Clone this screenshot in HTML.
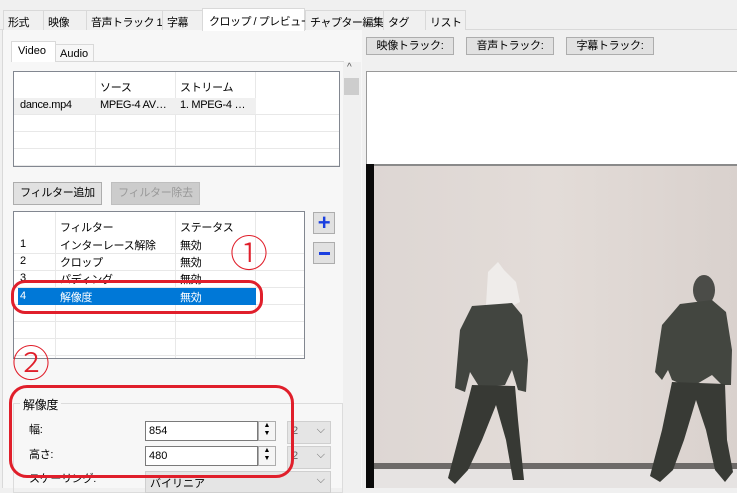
<!DOCTYPE html>
<html><head><meta charset="utf-8"><style>
*{margin:0;padding:0;box-sizing:border-box}
body{width:737px;height:488px;overflow:hidden;background:#f0f0f0;font-family:"Liberation Sans","Noto Sans CJK JP",sans-serif;font-size:11px;color:#000;position:relative}
.a{position:absolute}
.tab{position:absolute;top:10px;height:20px;border:1px solid #d9d9d9;border-bottom:none;background:#f0f0f0;padding:3px 0 0 4px;white-space:nowrap;letter-spacing:-0.5px}
.btn{position:absolute;border:1px solid #adadad;background:#e1e1e1;text-align:center;line-height:16px;letter-spacing:-0.3px}
.grid{position:absolute;background:#fff;border:1px solid #828790;overflow:hidden}
.hl{position:absolute;left:0;right:0;height:1px;background:#e8e8e8}
.vl{position:absolute;top:0;bottom:0;width:1px;background:#e8e8e8}
.t{position:absolute;white-space:nowrap;letter-spacing:-0.3px}
.inp{position:absolute;background:#fff;border:1px solid #7a7a7a;padding:3px 0 0 3px}
.spin{position:absolute;width:18px;border:1px solid #adadad;background:#f5f5f5}
.combo{position:absolute;background:#e5e5e5;border:1px solid #cfcfcf;padding:3px 0 0 4px;color:#666}
.red{position:absolute;border:3.5px solid #e01f2b;border-radius:14px}
</style></head><body>
<div class="a" style="left:0;top:29px;width:737px;height:1px;background:#d9d9d9"></div>
<div class="a" style="left:2px;top:29px;width:360px;height:459px;background:#f7f7f7;border-left:1px solid #d9d9d9"></div>
<div class="tab" style="left:3px;width:41px">形式</div>
<div class="tab" style="left:43px;width:44px">映像</div>
<div class="tab" style="left:86px;width:77px">音声トラック 1</div>
<div class="tab" style="left:162px;width:41px">字幕</div>
<div class="tab" style="left:202px;top:8px;height:23px;width:103px;background:#fff;padding-top:4px;padding-left:6px">クロップ / プレビュー</div>
<div class="tab" style="left:305px;width:79px">チャプター編集</div>
<div class="tab" style="left:383px;width:43px">タグ</div>
<div class="tab" style="left:425px;width:41px">リスト</div>
<div class="a" style="left:11px;top:61px;width:333px;height:1px;background:#d9d9d9"></div>
<div class="a" style="left:11px;top:41px;width:45px;height:21px;background:#fff;border:1px solid #d9d9d9;border-bottom:none;padding:3px 0 0 6px;font-size:11px">Video</div>
<div class="a" style="left:55px;top:44px;width:39px;height:18px;border:1px solid #d9d9d9;border-bottom:none;padding:3px 0 0 4px;font-size:11px">Audio</div>
<div class="grid" style="left:13px;top:71px;width:327px;height:96px">
<div class="vl" style="left:81px"></div><div class="vl" style="left:161px"></div><div class="vl" style="left:241px"></div>
<div class="a" style="left:0;top:26px;width:242px;height:16px;background:#f0f0f0"></div>
<div class="hl" style="top:42px"></div><div class="hl" style="top:59px"></div><div class="hl" style="top:76px"></div><div class="hl" style="top:93px"></div>
<div class="t" style="left:86px;top:7px">ソース</div><div class="t" style="left:166px;top:7px">ストリーム</div>
<div class="t" style="left:6px;top:27px">dance.mp4</div><div class="t" style="left:86px;top:27px">MPEG-4 AV…</div><div class="t" style="left:166px;top:27px">1. MPEG-4 …</div>
</div>
<div class="btn" style="left:13px;top:182px;width:89px;height:23px;line-height:21px">フィルター追加</div>
<div class="btn" style="left:111px;top:182px;width:89px;height:23px;line-height:21px;color:#999;background:#ccc;border-color:#bfbfbf">フィルター除去</div>
<div class="grid" style="left:13px;top:211px;width:292px;height:148px">
<div class="vl" style="left:41px"></div><div class="vl" style="left:161px"></div><div class="vl" style="left:241px"></div>
<div class="hl" style="top:41px"></div><div class="hl" style="top:58px"></div><div class="hl" style="top:75px"></div><div class="hl" style="top:92px"></div><div class="hl" style="top:109px"></div><div class="hl" style="top:126px"></div><div class="hl" style="top:143px"></div>
<div class="a" style="left:4px;top:76px;width:238px;height:17px;background:#0078d7"></div>
<div class="t" style="left:46px;top:7px">フィルター</div><div class="t" style="left:166px;top:7px">ステータス</div>
<div class="t" style="left:6px;top:26px">1</div><div class="t" style="left:46px;top:25px">インターレース解除</div><div class="t" style="left:166px;top:25px">無効</div>
<div class="t" style="left:6px;top:43px">2</div><div class="t" style="left:46px;top:42px">クロップ</div><div class="t" style="left:166px;top:42px">無効</div>
<div class="t" style="left:6px;top:60px">3</div><div class="t" style="left:46px;top:59px">パディング</div><div class="t" style="left:166px;top:59px">無効</div>
<div class="t" style="left:6px;top:78px;color:#fff">4</div><div class="t" style="left:46px;top:77px;color:#fff">解像度</div><div class="t" style="left:166px;top:77px;color:#fff">無効</div>
</div>
<div class="btn" style="left:313px;top:212px;width:22px;height:22px;font-size:22px;line-height:19px;color:#1a3fe0;font-weight:bold">+</div>
<div class="btn" style="left:313px;top:242px;width:22px;height:22px"><div class="a" style="left:5px;top:9px;width:11px;height:3px;background:#1a3fe0"></div></div>
<div class="a" style="left:13px;top:403px;width:330px;height:90px;border:1px solid #dcdcdc"></div>
<div class="t" style="left:20px;top:396px;background:#f7f7f7;padding:0 3px;font-size:12px">解像度</div>
<div class="t" style="left:29px;top:421px">幅:</div>
<div class="t" style="left:29px;top:446px">高さ:</div>
<div class="inp" style="left:145px;top:421px;width:113px;height:20px">854</div>
<div class="spin" style="left:258px;top:421px;height:20px;font-size:7px;line-height:8px;text-align:center">▲<br>▼</div>
<div class="inp" style="left:145px;top:446px;width:113px;height:20px">480</div>
<div class="spin" style="left:258px;top:446px;height:20px;font-size:7px;line-height:8px;text-align:center">▲<br>▼</div>
<div class="combo" style="left:287px;top:421px;width:44px;height:23px">2<span style="position:absolute;right:5px;top:2px">⌵</span></div>
<div class="combo" style="left:287px;top:446px;width:44px;height:23px">2<span style="position:absolute;right:5px;top:2px">⌵</span></div>
<div class="t" style="left:29px;top:470px">スケーリング:</div>
<div class="combo" style="left:145px;top:471px;width:186px;height:22px;color:#000">バイリニア<span style="position:absolute;right:5px;top:2px;color:#666">⌵</span></div>
<div class="a" style="left:343px;top:62px;width:18px;height:426px;background:#f0f0f0"></div>
<div class="t" style="left:347px;top:62px;font-size:10px;color:#555">^</div>
<div class="a" style="left:344px;top:78px;width:15px;height:17px;background:#cdcdcd"></div>
<div class="t" style="left:230px;top:234px;font-size:38px;color:#e01f2b;line-height:42px;font-weight:300">①</div>
<div class="t" style="left:12px;top:344px;font-size:38px;color:#e01f2b;line-height:42px;font-weight:300">②</div>
<div class="red" style="left:11px;top:280px;width:252px;height:34px"></div>
<div class="red" style="left:9px;top:385px;width:285px;height:93px;border-radius:18px"></div>
<div class="btn" style="left:366px;top:37px;width:88px;height:18px">映像トラック:</div>
<div class="btn" style="left:466px;top:37px;width:88px;height:18px">音声トラック:</div>
<div class="btn" style="left:566px;top:37px;width:88px;height:18px">字幕トラック:</div>
<div class="a" style="left:366px;top:71px;width:371px;height:417px;background:#fff;border:1px solid #999;border-right:none"></div>
<svg class="a" style="left:366px;top:164px" width="371" height="324" viewBox="366 164 371 324">
<defs><linearGradient id="g" x1="0" x2="1"><stop offset="0" stop-color="#ddd6d3"/><stop offset=".5" stop-color="#e3dcd8"/><stop offset="1" stop-color="#d9d1cd"/></linearGradient></defs>
<rect x="366" y="164" width="371" height="324" fill="url(#g)"/>
<rect x="366" y="164" width="371" height="2" fill="#8a8a8a"/>
<rect x="366" y="164" width="8" height="324" fill="#0a0a0a"/>
<rect x="374" y="463" width="363" height="6" fill="#6d6a68"/>
<rect x="374" y="469" width="363" height="19" fill="#e6e3e2"/>
<path d="M488 272 L498 262 L504 270 L516 282 L520 302 L510 307 L486 305 Z" fill="#efecea"/>
<path d="M472 306 L512 303 L522 315 L528 360 L526 392 L518 390 L512 370 L505 385 L480 388 L470 372 L465 392 L455 388 L460 330 Z" fill="#424540"/>
<path d="M472 385 L515 386 L518 420 L522 460 L524 480 L513 480 L506 440 L496 405 L482 440 L468 470 L455 484 L448 478 L458 440 Z" fill="#373934"/>
<ellipse cx="704" cy="290" rx="11" ry="15" fill="#4b4c48"/>
<path d="M680 304 L712 300 L726 312 L732 350 L731 385 L722 385 L712 375 L690 388 L672 380 L668 370 L662 380 L655 372 L662 325 Z" fill="#434640"/>
<path d="M672 382 L725 384 L727 440 L733 472 L725 482 L715 470 L706 430 L696 400 L684 440 L673 470 L660 482 L650 476 L662 430 Z" fill="#383a35"/>
</svg>
</body></html>
